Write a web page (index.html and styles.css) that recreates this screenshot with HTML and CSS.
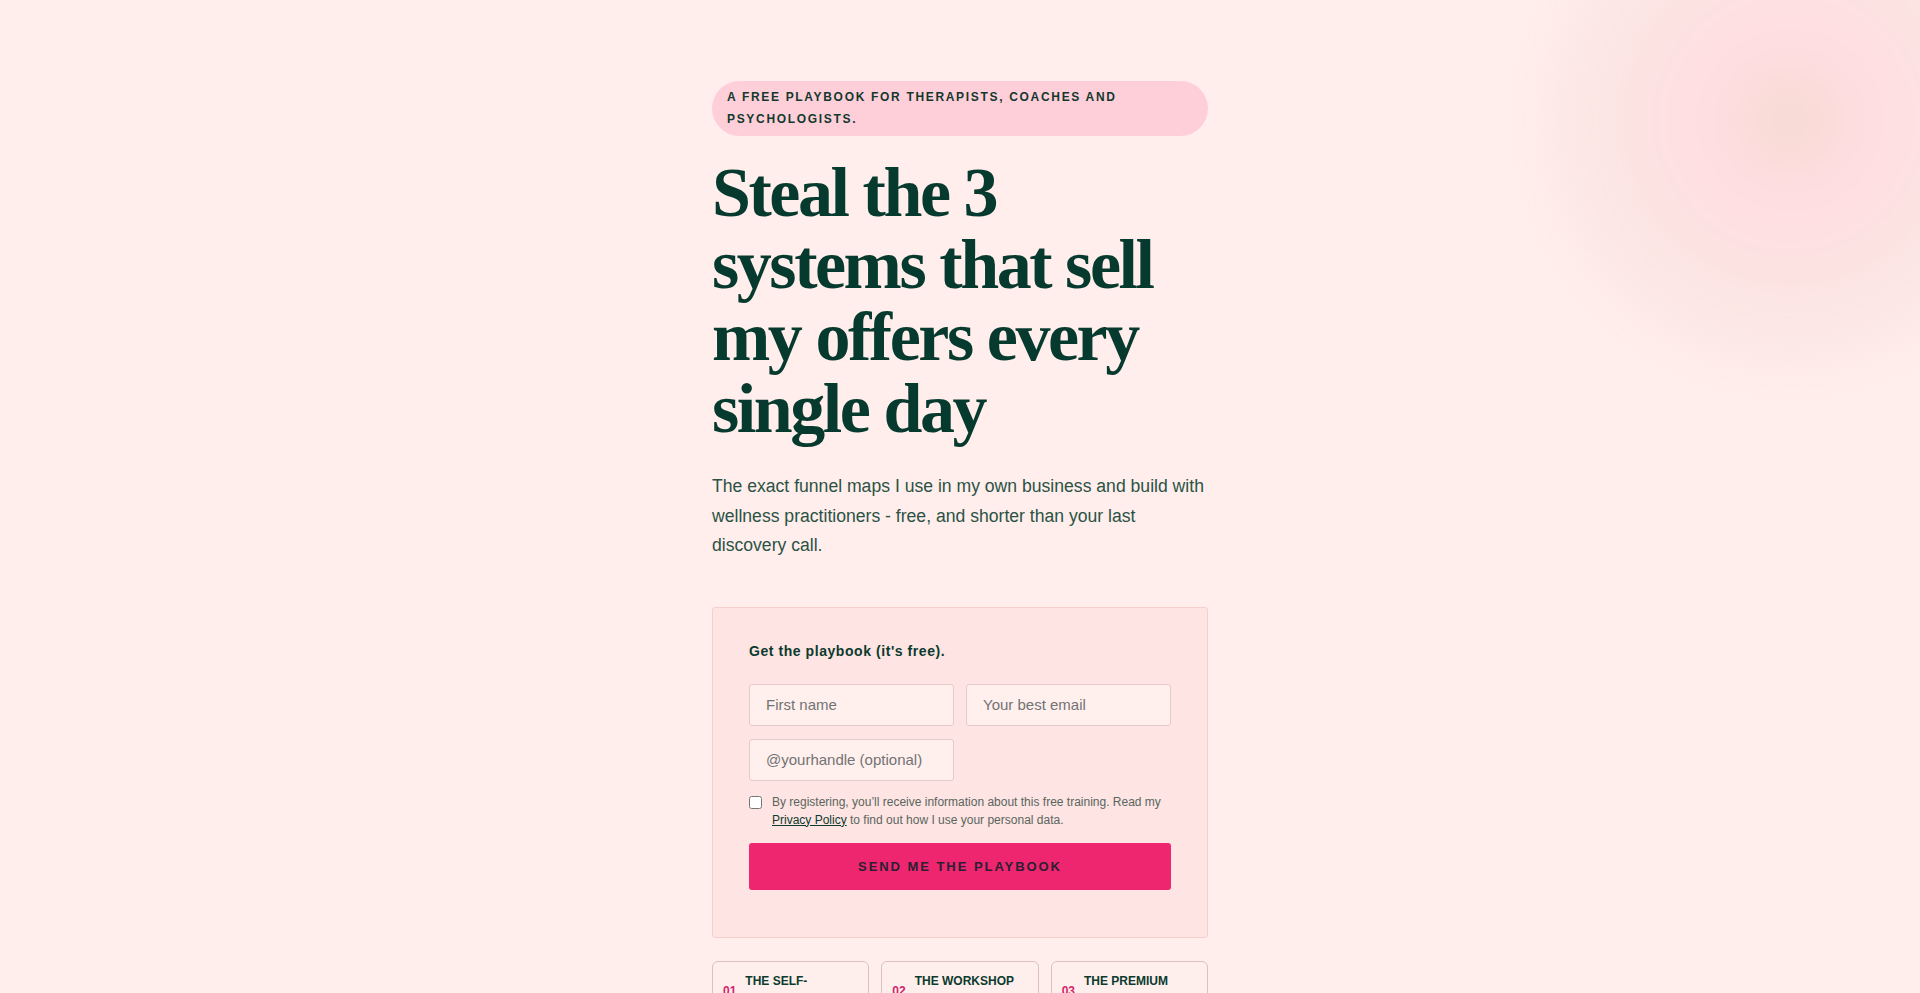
FILE: index.html
```html
<!DOCTYPE html>
<html lang="en">
<head>
<meta charset="utf-8">
<title>Steal the 3 systems</title>
<link rel="stylesheet" href="styles.css">
</head>
<body>
<div class="glow" aria-hidden="true"></div>
<main class="page">
  <p class="eyebrow">A free playbook for therapists, coaches and psychologists.</p>
  <h1 class="title">Steal the 3 systems that sell my offers every single day</h1>
  <p class="lead">The exact funnel maps I use in my own business and build with wellness practitioners - free, and shorter than your last discovery call.</p>

  <form class="signup" onsubmit="return false;">
    <h2 class="signup-title">Get the playbook (it's free).</h2>
    <div class="fields">
      <input class="field" type="text" placeholder="First name">
      <input class="field" type="email" placeholder="Your best email">
      <input class="field" type="text" placeholder="@yourhandle (optional)">
    </div>
    <label class="consent">
      <input class="consent-box" type="checkbox">
      <span>By registering, you’ll receive information about this free training. Read my <a href="#" class="consent-link">Privacy Policy</a> to find out how I use your personal data.</span>
    </label>
    <button class="cta" type="submit">Send me the playbook</button>
  </form>

  <section class="systems">
    <div class="system">
      <span class="system-num">01</span>
      <h3 class="system-name">The self-<br>paced funnel</h3>
    </div>
    <div class="system">
      <span class="system-num">02</span>
      <h3 class="system-name">The workshop<br>funnel</h3>
    </div>
    <div class="system">
      <span class="system-num">03</span>
      <h3 class="system-name">The premium<br>funnel</h3>
    </div>
  </section>
</main>
</body>
</html>
```

FILE: styles.css
```css
html, body {
  margin: 0;
  padding: 0;
}

body {
  background: #ffeeeb;
  font-family: "Liberation Sans", Arial, sans-serif;
  color: #0b3a2f;
  min-height: 100vh;
  overflow-x: hidden;
}

.glow {
  position: absolute;
  top: -120px;
  left: 1550px;
  width: 480px;
  height: 480px;
  border-radius: 50%;
  background: radial-gradient(circle at 50% 50%,
    #f4d9d1 0%,
    #f8dbd5 10%,
    #ffdde1 19%,
    #ffdfe2 32%,
    #fce3e2 46%,
    #fbe6e4 60%,
    rgba(252, 233, 230, 0.7) 78%,
    rgba(255, 238, 235, 0) 100%);
  filter: blur(24px);
  pointer-events: none;
}

.page {
  position: relative;
  max-width: 496px;
  margin: 0 auto;
  padding-top: 81px;
}

.eyebrow {
  margin: 0;
  padding: 6px 15px;
  background: #ffcfd9;
  border-radius: 999px;
  font-size: 12px;
  font-weight: 700;
  letter-spacing: 0.14em;
  line-height: 21.5px;
  text-transform: uppercase;
  color: #12382d;
}

.title {
  margin: 21px 0 0;
  font-family: "Liberation Serif", "Times New Roman", serif;
  font-weight: 700;
  font-size: 70px;
  line-height: 72px;
  letter-spacing: -0.035em;
  color: #073a2e;
}

.lead {
  margin: 27px 0 0;
  font-size: 17.6px;
  line-height: 1.68;
  color: #2b5245;
}

.signup {
  margin-top: 46px;
  padding: 33px 36px 47px;
  background: #fee4e2;
  border: 1px solid #f3d0ce;
  border-radius: 3px;
}

.signup-title {
  margin: 0 0 23px;
  font-size: 14px;
  line-height: 20px;
  font-weight: 700;
  letter-spacing: 0.04em;
  color: #0b3a2f;
}

.fields {
  display: grid;
  grid-template-columns: 1fr 1fr;
  gap: 13px 12px;
}

.field {
  box-sizing: border-box;
  width: 100%;
  min-width: 0;
  height: 42px;
  padding: 0 16px;
  background: #fff0ee;
  border: 1px solid #e6c9c8;
  border-radius: 3px;
  font-family: "Liberation Sans", Arial, sans-serif;
  font-size: 15px;
  color: #1d3a31;
  outline: none;
}

.field::placeholder {
  color: #737373;
}

.consent {
  display: flex;
  align-items: flex-start;
  gap: 10px;
  margin-top: 12px;
  font-size: 12px;
  line-height: 18px;
  color: #59665f;
}

.consent-box {
  flex: none;
  width: 13px;
  height: 13px;
  margin: 3px 0 0;
}

.consent-link {
  color: #0b3a2f;
  text-decoration: underline;
}

.cta {
  display: block;
  width: 100%;
  height: 47px;
  margin-top: 14px;
  border: 0;
  border-radius: 3px;
  background: #ee2670;
  font-family: "Liberation Sans", Arial, sans-serif;
  font-size: 13px;
  font-weight: 700;
  letter-spacing: 0.15em;
  text-transform: uppercase;
  color: #2a2031;
  cursor: pointer;
}

.systems {
  display: grid;
  grid-template-columns: repeat(3, 1fr);
  gap: 12px;
  margin-top: 23px;
  padding-bottom: 40px;
}

.system {
  display: flex;
  align-items: center;
  gap: 9px;
  padding: 9px 10px 12px;
  border: 1px solid #dcc1c0;
  border-radius: 6px;
  background: #ffefec;
}

.system-num {
  flex: none;
  font-size: 12px;
  font-weight: 700;
  color: #d3246a;
}

.system-name {
  margin: 0;
  font-size: 12px;
  line-height: 20px;
  font-weight: 700;
  text-transform: uppercase;
  color: #0b3a2f;
}
```
